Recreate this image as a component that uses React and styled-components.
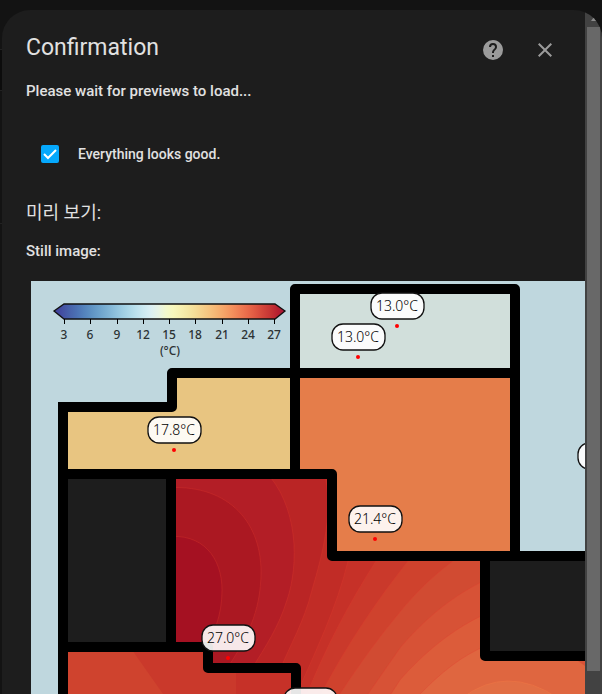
import React, { useState } from "react";
import styled, { createGlobalStyle } from "styled-components";

const GlobalStyle = createGlobalStyle`
  * { box-sizing: border-box; }
  body {
    margin: 0;
    overflow: hidden;
    background: #131313;
    color: #e1e1e1;
    font-family: Roboto, "Noto Sans CJK KR", sans-serif;
  }
`;

const Backdrop = styled.div`
  height: 100vh;
  padding: 10px 0 0 2px;
  background: linear-gradient(
    #131313 49px, #222 49px, #222 50px, #0c0c0c 50px, #0c0c0c 90px,
    #222 90px, #222 91px, #131313 91px, #131313 223px,
    #222 223px, #222 224px, #131313 224px
  );
`;

const Dialog = styled.div`
  display: flex;
  height: 100%;
  overflow: hidden;
  border-radius: 28px 28px 0 0;
  background: #1d1d1d;
`;

const Content = styled.main`
  flex: 1;
  min-width: 0;
  overflow: hidden;
  padding: 16px 0 0 24px;
`;

const Header = styled.header`
  display: flex;
  align-items: center;
  height: 48px;
  padding-right: 16px;
`;

const Title = styled.h1`
  flex: 1;
  margin: 0 0 4px;
  font-size: 23px;
  font-weight: 400;
  line-height: 28px;
`;

const IconButton = styled.button`
  display: grid;
  place-items: center;
  width: 48px;
  height: 48px;
  margin-left: 4px;
  padding: 0;
  border: 0;
  background: none;
  color: #9b9b9b;
  cursor: pointer;
`;

const Paragraph = styled.p`
  margin: ${(p) => p.$top}px 0 0;
  font-size: 15px;
  font-weight: 500;
  line-height: 20px;
`;

const CheckRow = styled.label`
  display: flex;
  align-items: center;
  gap: 19px;
  height: 46px;
  margin-top: 30px;
  padding-left: 15px;
  font-size: 14px;
  font-weight: 500;
`;

const CheckMark = styled.span`
  display: grid;
  width: 18px;
  height: 18px;
  > * { grid-area: 1 / 1; }
  svg { pointer-events: none; }
`;

const CheckInput = styled.input`
  appearance: none;
  width: 18px;
  height: 18px;
  margin: 0;
  border: 2px solid #9b9b9b;
  border-radius: 2px;
  &:checked { border-color: #05a8fc; background: #05a8fc; }
`;

const PreviewTitle = styled.h2`
  margin: 24px 0 0;
  font-size: 18px;
  font-weight: 400;
  line-height: 24px;
`;

const Preview = styled.div`
  margin: 20px 0 0 5px;
  overflow: hidden;
  svg { display: block; }
`;

const Scrollbar = styled.div`
  display: flex;
  flex-direction: column;
  align-items: center;
  flex: 0 0 17px;
  padding-bottom: 23px;
  background: #424242;
`;

const ScrollArrow = styled.span`
  display: grid;
  place-items: center;
  height: 17px;
`;

const Thumb = styled.span`
  flex: 1;
  width: 13px;
  background: #686868;
`;

const TickText = styled.text`
  fill: #2c3234;
  font: 500 12px "Noto Sans", sans-serif;
  text-anchor: middle;
`;

const PillText = styled.text`
  fill: #000;
  font: 300 14px "Noto Sans", "Open Sans", sans-serif;
  text-anchor: middle;
`;

const scaleColors = [
  "#3e3c99", "#434da1", "#4760aa", "#4b70b3", "#5382bc", "#5e92c3", "#6ba1cb",
  "#7aafd2", "#8abdda", "#9bcbe1", "#abd7e7", "#bce1ed", "#cce9f1", "#dbeff3",
  "#e7f3e6", "#f2f8cd", "#f8f8bd", "#f7f0b0", "#f5e7a3", "#f5dc96", "#f5ce89",
  "#f6c17d", "#f6b271", "#f6a166", "#f48f5c", "#ef7c53", "#e96a4a", "#df5842",
  "#d3453a", "#c63534", "#b6202f", "#a71438",
];

const readings = [
  { x: 397, y: 306, text: "13.0°C", dot: 326 },
  { x: 358, y: 337, text: "13.0°C", dot: 357 },
  { x: 174, y: 430, text: "17.8°C", dot: 450 },
  { x: 375, y: 519, text: "21.4°C", dot: 539 },
  { x: 228, y: 638, text: "27.0°C", dot: 658 },
  { x: 310, y: 701 },
  { x: 604, y: 456 },
];

const bands = [
  ["#df6640", "M165 470H600V710H165Z"],
  ["#dc5c3a", "M165 470H490V644C460 656 440 674 420 694L400 720H165Z"],
  ["#d75236", "M165 470H490V612C452 628 421 656 400 680L374 720H165Z"],
  ["#d14b32", "M165 470H490V578C452 595 423 621 400 648L350 720H165Z"],
  ["#cf422d", "M165 470H520L453 561C432 576 412 597 400 612C379 637 358 666 336 700H165Z"],
  ["#ca392b", "M165 470H470L408 561C378 599 345 647 318 700H165Z"],
  ["#c63128", "M165 470H420L376 561C346 608 325 650 307 694V710H165Z"],
  ["#c12c26", "M165 470H380L348 561C337 607 315 653 294 700H165Z"],
  ["#ba2525", "M165 470H324C334 512 323 552 312 590C304 622 290 645 280 670H165Z"],
  ["#b31e26", "M165 470H264C299 505 299 565 287 600C279 626 266 646 251 670H165Z"],
  ["#ab1822", "M165 488C225 483 261 519 261 572C261 612 246 640 226 670H165Z"],
  ["#a51122", "M165 537C203 532 222 558 222 590C222 616 214 634 201 658H165Z"],
];

function FloorMap() {
  return (
    <svg width="554" height="420" viewBox="31 281 554 420" role="img" aria-label="Temperature map">
      <defs>
        <linearGradient id="scale">
          {scaleColors.map((c, i) => (
            <stop key={c} offset={i / (scaleColors.length - 1)} stopColor={c} />
          ))}
        </linearGradient>
      </defs>
      <rect x="31" y="281" width="554" height="420" fill="#bfd7de" />
      {bands.map(([fill, d]) => (
        <path key={fill} d={d} fill={fill} stroke="#e03a30" strokeOpacity=".3" strokeWidth="1" />
      ))}
      <path d="M462 698Q507 664 558 698Z" fill="#e16e44" stroke="#ef7444" strokeOpacity=".6" />
      <path d="M578 661L585 666V661Z" fill="#d75236" />
      <path d="M295 289H515V373H295Z" fill="#d1dfdb" />
      <path d="M63 407H172V373H295V474H63Z" fill="#e8c581" />
      <path d="M295 373H515V556H332V474H295Z" fill="#e57d4a" />
      <path d="M515 281H585V556H515Z" fill="#bfd7de" />
      <path d="M63 474H171V647H63ZM485 556H590V656H485Z" fill="#1d1d1d" />
      <path d="M63 647H208V668H296V701H63Z" fill="#c63128" />
      <path d="M63 647H208V668H236V701H63Z" fill="#ca392b" />
      <path d="M63 647H130L168 701H63Z" fill="#cf432e" />
      <g fill="none" stroke="#000" strokeWidth="10" strokeLinejoin="round">
        <path d="M295 289H515V556H332V474H295Z" />
        <path d="M520 373H172V407H58" />
        <path d="M63 402V701M58 474H296M171 474V647M58 647H208V668H296V701" />
        <path d="M590 556H485V656H590" />
      </g>

      <path
        d="M64 304H275L285 311L275 319H64L54 311Z"
        fill="url(#scale)"
        stroke="#111"
        strokeWidth="1.3"
      />
      {[3, 6, 9, 12, 15, 18, 21, 24, 27].map((t, i) => {
        const x = Math.round(64 + (i * 210) / 8);
        return (
          <g key={t}>
            <path d={`M${x + 0.5} 319V324`} stroke="#000" />
            <TickText x={x} y="339">{t}</TickText>
          </g>
        );
      })}
      <TickText x="170" y="355">(°C)</TickText>

      {readings.map((r) => (
        <g key={`${r.x}-${r.y}`}>
          <rect x={r.x - 26} y={r.y - 13} width="53" height="26" rx="11" fill="#fff" fillOpacity=".9" stroke="#111" strokeWidth="1.3" />
          {r.text && <PillText x={r.x} y={r.y + 5}>{r.text}</PillText>}
          {r.dot && <circle cx={r.x} cy={r.dot} r="2" fill="#f00" />}
        </g>
      ))}
    </svg>
  );
}

export default function App() {
  const [checked, setChecked] = useState(true);
  return (
    <>
      <GlobalStyle />
      <Backdrop>
        <Dialog role="dialog" aria-label="Confirmation">
          <Content>
            <Header>
              <Title>Confirmation</Title>
              <IconButton aria-label="Help">
                <svg width="24" height="24" viewBox="0 0 24 24" fill="currentColor">
                  <path d="M15.07,11.25L14.17,12.17C13.45,12.89 13,13.5 13,15H11V14.5C11,13.39 11.45,12.39 12.17,11.67L13.41,10.41C13.78,10.05 14,9.55 14,9C14,7.89 13.1,7 12,7A2,2 0 0,0 10,9H8A4,4 0 0,1 12,5A4,4 0 0,1 16,9C16,9.88 15.64,10.67 15.07,11.25M13,19H11V17H13M12,2A10,10 0 0,0 2,12A10,10 0 0,0 12,22A10,10 0 0,0 22,12C22,6.47 17.5,2 12,2Z" />
                </svg>
              </IconButton>
              <IconButton aria-label="Close">
                <svg width="24" height="24" viewBox="0 0 24 24" fill="currentColor">
                  <path d="M19,6.41L17.59,5L12,10.59L6.41,5L5,6.41L10.59,12L5,17.59L6.41,19L12,13.41L17.59,19L19,17.59L13.41,12L19,6.41Z" />
                </svg>
              </IconButton>
            </Header>
            <Paragraph $top={7}>Please wait for previews to load...</Paragraph>
            <CheckRow>
              <CheckMark>
                <CheckInput type="checkbox" checked={checked} onChange={(e) => setChecked(e.target.checked)} />
                {checked && (
                  <svg width="18" height="18" viewBox="0 0 18 18" fill="none" stroke="#fff" strokeWidth="2">
                    <path d="M3 9L7 13L15 5" />
                  </svg>
                )}
              </CheckMark>
              Everything looks good.
            </CheckRow>
            <PreviewTitle>미리 보기:</PreviewTitle>
            <Paragraph $top={16}>Still image:</Paragraph>
            <Preview>
              <FloorMap />
            </Preview>
          </Content>
          <Scrollbar aria-hidden="true">
            <ScrollArrow>
              <svg width="6" height="4" viewBox="0 0 6 4"><path d="M0 4L3 0L6 4Z" fill="#8b8b8b" /></svg>
            </ScrollArrow>
            <Thumb />
          </Scrollbar>
        </Dialog>
      </Backdrop>
    </>
  );
}
